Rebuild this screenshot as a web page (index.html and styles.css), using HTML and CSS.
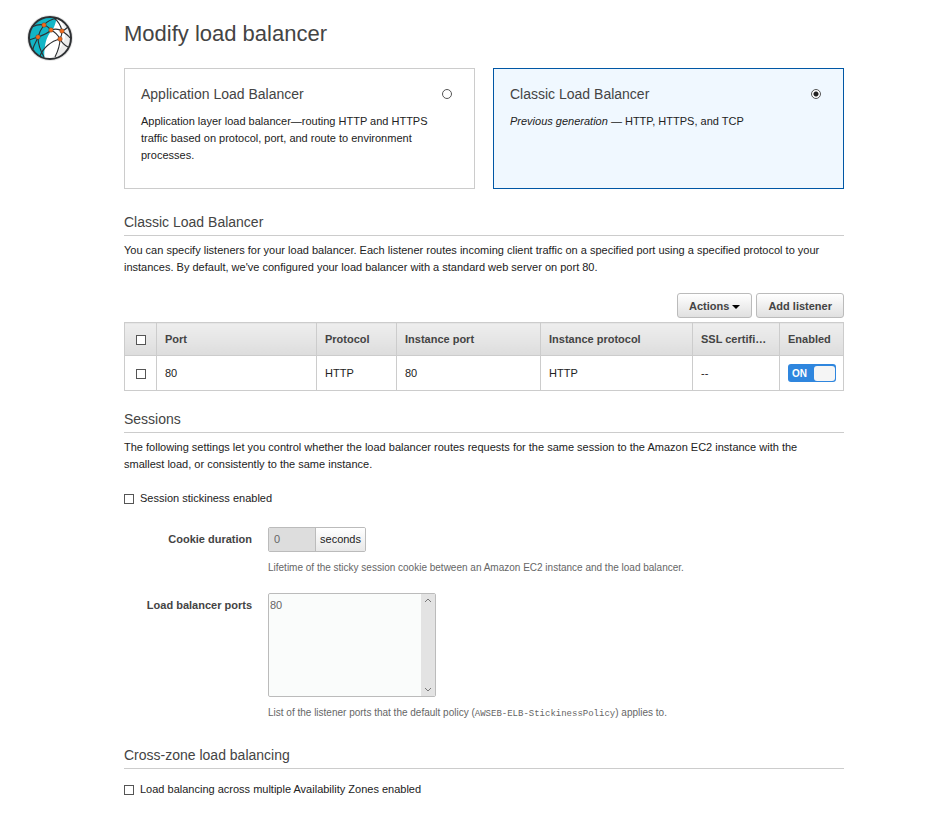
FILE: index.html
```
<!DOCTYPE html>
<html lang="en">
<head>
    <meta charset="UTF-8">
    <meta name="viewport" content="width=device-width, initial-scale=1.0">
    <title>Modify load balancer</title>
    <link rel="stylesheet" href="styles.css">
</head>
<body>
    <div class="page">
        <div class="logo">
            <svg viewBox="0 0 48 48" width="48" height="48" aria-hidden="true">
                <defs>
                    <clipPath id="globe"><circle cx="24" cy="24" r="21"/></clipPath>
                </defs>
                <circle cx="24" cy="24" r="23" fill="#e4e4e4"/>
                <circle cx="24" cy="24" r="21" fill="#fff"/>
                <g clip-path="url(#globe)">
                    <path d="M0 0H32C30 7 29 12 27 15C22 20 20 26 19 32S18 42 19 48H0Z" fill="#12b5c6"/>
                    <path d="M30 2c5 4 8 9 9 15s-1 11-4 16-7 9-11 13h21V2z" fill="#ececec"/>
                    <g fill="none" stroke="#2d3033" stroke-width="1.1">
                        <path d="M6 13c4-2 8-3 12-2s5 3 7 5"/>
                        <path d="M32 4c-6 1-11 3-14 7s-5 8-6 12-4 7-5 12"/>
                        <path d="M3 26c3-1 6-2 9-3s9-3 13-7"/>
                        <path d="M25 16c3-1 8-1 11 1s6 4 8 7"/>
                        <path d="M25 16c4 2 7 5 9 9s6 7 8 8"/>
                        <path d="M28 4c4 3 7 8 8 13 0 3-1 6-2 8 0 7-2 12-5 18"/>
                        <path d="M36 17c3-1 4-2 6-4"/>
                        <path d="M34 25c-9 2-17 9-20 17"/>
                        <path d="M12 23c0 8 2 13 6 20"/>
                    </g>
                </g>
                <circle cx="24" cy="24" r="21" fill="none" stroke="#2d3033" stroke-width="2"/>
                <g fill="#f26b1d" stroke="#4b3528" stroke-width="0.4">
                    <circle cx="18" cy="11" r="2.3"/>
                    <circle cx="25" cy="16" r="2.3"/>
                    <circle cx="12" cy="23" r="2.3"/>
                    <circle cx="36" cy="17" r="2.3"/>
                    <circle cx="34" cy="25" r="2.3"/>
                </g>
            </svg>
        </div>

        <main class="content">
            <h1>Modify load balancer</h1>

            <div class="cards">
                <label class="card">
                    <span class="card-head">
                        <span class="card-title">Application Load Balancer</span>
                        <input type="radio" name="lb-type">
                    </span>
                    <span class="card-text">Application layer load balancer—routing HTTP and HTTPS traffic based on protocol, port, and route to environment processes.</span>
                </label>
                <label class="card selected">
                    <span class="card-head">
                        <span class="card-title">Classic Load Balancer</span>
                        <input type="radio" name="lb-type" checked>
                    </span>
                    <span class="card-text"><em>Previous generation</em> — HTTP, HTTPS, and TCP</span>
                </label>
            </div>

            <section>
                <h2>Classic Load Balancer</h2>
                <p>You can specify listeners for your load balancer. Each listener routes incoming client traffic on a specified port using a specified protocol to your instances. By default, we've configured your load balancer with a standard web server on port 80.</p>

                <div class="toolbar">
                    <button type="button" class="btn">Actions <span class="caret"></span></button>
                    <button type="button" class="btn">Add listener</button>
                </div>

                <table class="listeners">
                    <thead>
                        <tr>
                            <th class="col-check"><input type="checkbox" aria-label="Select all listeners"></th>
                            <th class="col-port">Port</th>
                            <th class="col-protocol">Protocol</th>
                            <th class="col-iport">Instance port</th>
                            <th class="col-iprotocol">Instance protocol</th>
                            <th class="col-ssl">SSL certificate</th>
                            <th class="col-enabled">Enabled</th>
                        </tr>
                    </thead>
                    <tbody>
                        <tr>
                            <td class="col-check"><input type="checkbox" aria-label="Select listener 80"></td>
                            <td>80</td>
                            <td>HTTP</td>
                            <td>80</td>
                            <td>HTTP</td>
                            <td>--</td>
                            <td>
                                <label class="switch">
                                    <input type="checkbox" aria-label="Listener 80 enabled" checked>
                                    <span class="switch-text">ON</span>
                                    <span class="switch-knob"></span>
                                </label>
                            </td>
                        </tr>
                    </tbody>
                </table>
            </section>

            <section>
                <h2>Sessions</h2>
                <p>The following settings let you control whether the load balancer routes requests for the same session to the Amazon EC2 instance with the smallest load, or consistently to the same instance.</p>

                <label class="check"><input type="checkbox"> Session stickiness enabled</label>

                <div class="field">
                    <label class="field-label" for="duration">Cookie duration</label>
                    <div class="field-body">
                        <div class="input-group">
                            <input type="text" id="duration" value="0" disabled>
                            <span class="addon">seconds</span>
                        </div>
                        <div class="hint">Lifetime of the sticky session cookie between an Amazon EC2 instance and the load balancer.</div>
                    </div>
                </div>

                <div class="field">
                    <label class="field-label" for="ports">Load balancer ports</label>
                    <div class="field-body">
                        <div class="listbox">
                            <select id="ports" size="6" multiple disabled>
                                <option>80</option>
                            </select>
                            <div class="scrollbar">
                                <svg viewBox="0 0 8 5" width="8" height="5"><path d="M1 4l3-3 3 3"/></svg>
                                <svg viewBox="0 0 8 5" width="8" height="5"><path d="M1 1l3 3 3-3"/></svg>
                            </div>
                        </div>
                        <div class="hint">List of the listener ports that the default policy (<code>AWSEB-ELB-StickinessPolicy</code>) applies to.</div>
                    </div>
                </div>
            </section>

            <section class="cross-zone">
                <h2>Cross-zone load balancing</h2>
                <label class="check"><input type="checkbox"> Load balancing across multiple Availability Zones enabled</label>
            </section>
        </main>
    </div>
</body>
</html>
```

FILE: styles.css
```
* { box-sizing: border-box; }
body { margin: 0; background: #fff; color: #444; font-family: "Liberation Sans", Arial, sans-serif; font-size: 11px; line-height: 17px; }

.page { display: flex; padding: 14px 101px 12px 26px; }
.logo { flex: none; width: 98px; }
.logo svg { display: block; }
.content { flex: 1; min-width: 0; }

h1, h2 { font-weight: normal; }
h1 { margin: 5px 0 19px; font-size: 22px; line-height: 30px; }
h2 { margin: 0 0 6px; padding-bottom: 4px; border-bottom: 1px solid #ccc; font-size: 14px; line-height: 18px; }
p { margin: 0; padding-right: 8px; }
p, .card-text, td, .check, .addon { color: #222; }
section { margin-top: 19px; }

input[type="checkbox"], input[type="radio"] { appearance: none; flex: none; width: 10px; height: 10px; margin: 0; background: #fff; border: 1px solid #555; }
input[type="radio"] { border-radius: 50%; }
input[type="radio"]:checked { background: radial-gradient(circle, #222 2px, #fff 3px); }
input[type="checkbox"]:checked { background: #444; }

/* balancer type */
.cards { display: grid; grid-template-columns: 1fr 1fr; gap: 18px; margin-bottom: 24px; }
.card { min-height: 121px; padding: 16px; border: 1px solid #ccc; cursor: pointer; }
.card.selected { background: #f0f8ff; border-color: #0057a5; }
.card-head { display: flex; justify-content: space-between; align-items: center; margin-bottom: 10px; padding-right: 6px; }
.card-title { font-size: 14px; line-height: 18px; }
.card-text { display: block; padding-right: 16px; }

/* listeners */
.toolbar { display: flex; justify-content: flex-end; gap: 4px; margin: 17px 0 4px; }
.btn { height: 25px; padding: 0 11px; background: linear-gradient(#fff, #e0e0e0); border: 1px solid #bbb; border-radius: 3px; color: #444; font-family: inherit; font-size: 11px; font-weight: bold; cursor: pointer; }
.caret { display: inline-block; border: 4px solid transparent; border-top-color: #000; border-bottom: 0; vertical-align: middle; }
.listeners { width: 100%; table-layout: fixed; border-collapse: collapse; }
.listeners th, .listeners td { height: 33px; padding: 0 8px; border: 1px solid #ccc; text-align: left; overflow: hidden; text-overflow: ellipsis; white-space: nowrap; }
.listeners td { height: 35px; }
.listeners th { background: linear-gradient(#eee, #ddd); font-weight: bold; }
.listeners .col-check { width: 32px; padding: 0; text-align: center; }
.col-check input { vertical-align: middle; }
.col-port { width: 160px; }
.col-protocol { width: 80px; }
.col-iport { width: 144px; }
.col-iprotocol { width: 152px; }
.col-ssl { width: 87px; }
.switch { display: flex; align-items: center; justify-content: space-between; width: 48px; height: 18px; padding: 1px 1px 1px 4px; background: #2f86de; border-radius: 3px; color: #fff; cursor: pointer; }
.switch input[type="checkbox"] { position: absolute; opacity: 0; }
.switch-text { font-size: 10px; font-weight: bold; }
.switch-knob { width: 21px; height: 15px; background: #f5f5f5; border-radius: 3px; }

/* form */
.check { display: flex; align-items: center; gap: 6px; margin-top: 17px; }
.field { display: flex; gap: 16px; margin-top: 17px; }
.field-label { flex: none; width: 128px; padding-top: 4px; font-weight: bold; text-align: right; }
.check + .field { margin-top: 20px; }
.input-group { display: flex; width: 98px; height: 25px; border: 1px solid #bbb; border-radius: 2px; overflow: hidden; }
.input-group input { flex: 1; min-width: 0; padding: 0 5px; background: #ddd; border: 0; border-right: 1px solid #bbb; color: #666; font: inherit; }
.addon { padding: 3px 4px; background: linear-gradient(#fff, #e8e8e8); }
.hint { margin-top: 7px; color: #666; font-size: 10px; }
.hint code { font-family: "Liberation Mono", monospace; font-size: 9px; }
.listbox { display: flex; width: 168px; height: 104px; border: 1px solid #bbb; border-radius: 2px; overflow: hidden; }
.listbox select { flex: 1; min-width: 0; padding: 5px 0; background: #fafcfb; border: 0; color: #666; font: inherit; opacity: 1; overflow: hidden; }
.listbox option { padding: 0 1px; color: #666; }
.scrollbar { display: flex; flex-direction: column; justify-content: space-between; align-items: center; width: 14px; padding: 4px 0; background: #e3e3e3; }
.scrollbar path { fill: none; stroke: #777; }
.cross-zone { margin-top: 23px; }
.cross-zone .check { margin-top: 12px; }
```
